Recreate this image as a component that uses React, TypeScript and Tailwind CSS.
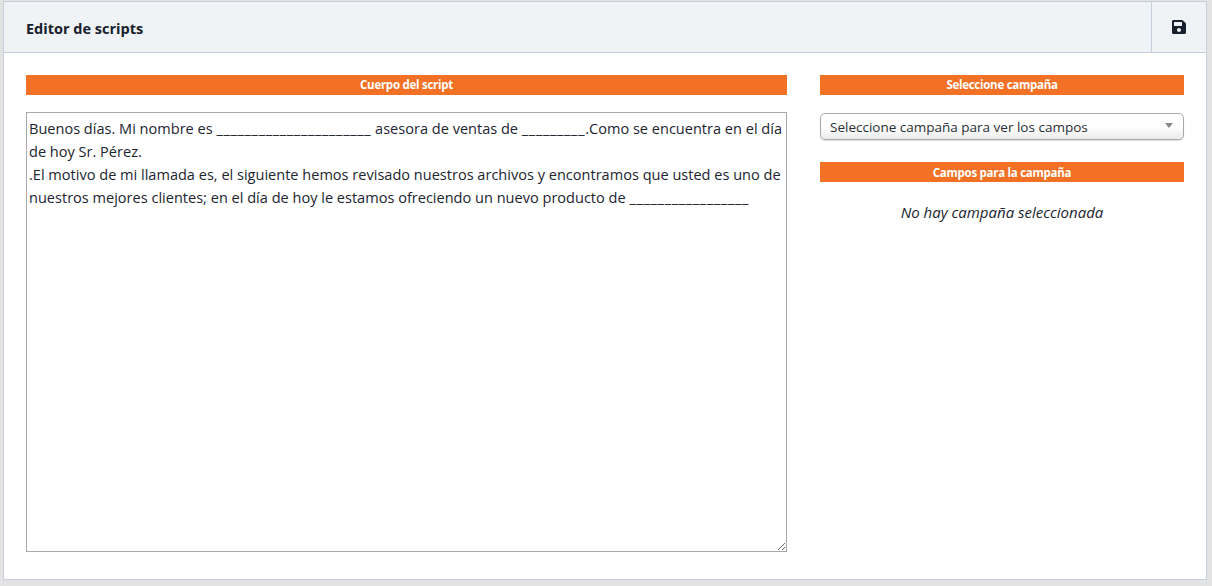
import React from 'react';

const SectionBar: React.FC<{ label: string; className?: string }> = ({ label, className }) => (
  <div className={`h-5 bg-[#f37124] text-center text-[11.5px] font-bold tracking-[-0.27px] text-white ${className ?? 'leading-5'}`}>{label}</div>
);

// underscores are wider in the original font
const Blank: React.FC<{ text: string }> = ({ text }) => <span className="tracking-[0.67px]">{text}</span>;

const App: React.FC = () => {
  return (
    <div className="h-[586px] w-[1212px] overflow-hidden bg-[#e3e3e3] pt-px pr-[5px] pb-[6px] pl-[3px] font-['Open_Sans','Noto_Sans',sans-serif] text-[#1c2430]">
      <div className="flex h-[579px] flex-col border border-[#c5d0dc] bg-white">
        {/* Header */}
        <div className="flex h-[51px] shrink-0 items-center border-b border-[#c5d0dc] bg-[#eff3f6]">
          <h1 className="flex-1 pt-[3px] pl-[22px] text-[14.5px] font-bold text-[#16202c]">Editor de scripts</h1>
          <button className="flex h-full w-[55px] items-center justify-center border-l border-[#c5d0dc]">
            <svg width="16" height="16" viewBox="0 0 448 512" fill="#16202c">
              <path d="M433.941 129.941l-83.882-83.882A48 48 0 0 0 316.118 32H48C21.49 32 0 53.49 0 80v352c0 26.51 21.49 48 48 48h352c26.51 0 48-21.49 48-48V163.882a48 48 0 0 0-14.059-33.941zM224 416c-35.346 0-64-28.654-64-64 0-35.346 28.654-64 64-64s64 28.654 64 64c0 35.346-28.654 64-64 64zm96-304.52V212c0 6.627-5.373 12-12 12H76c-6.627 0-12-5.373-12-12V108c0-6.627 5.373-12 12-12h228.52c3.183 0 6.235 1.264 8.485 3.515l3.48 3.48A11.996 11.996 0 0 1 320 111.48z" />
            </svg>
          </button>
        </div>

        {/* Body */}
        <div className="grid flex-1 grid-cols-[761px_364px] gap-x-[33px] px-[22px] pt-[22px]">
          <div className="flex flex-col gap-[17px]">
            <SectionBar label="Cuerpo del script" />
            <div
              contentEditable
              suppressContentEditableWarning
              className="h-[440px] w-[761px] resize overflow-auto border border-[#a9a9a9] px-[2px] py-1 text-[14.55px] leading-[23px] whitespace-nowrap text-[#1c2430] outline-none"
            >
              <div>
                Buenos días. Mi nombre es <Blank text="______________________" /> asesora de ventas de <Blank text="_________" />.Como se encuentra en el día
              </div>
              <div>de hoy Sr. Pérez.</div>
              <div>.El motivo de mi llamada es, el siguiente hemos revisado nuestros archivos y encontramos que usted es uno de</div>
              <div>
                nuestros mejores clientes; en el día de hoy le estamos ofreciendo un nuevo producto de <Blank text="_________________" />
              </div>
            </div>
          </div>

          <div className="flex flex-col">
            <SectionBar label="Seleccione campaña" />
            <div className="mt-[18px] flex h-[27px] items-center justify-between rounded-[5px] border border-[#a8a8a8] bg-gradient-to-b from-white from-50% to-[#ebebeb] pr-[10px] pl-[9px] shadow-[0_1px_1px_rgba(0,0,0,0.12)]">
              <span className="pt-0.5 text-[13.5px] text-[#2a2f36]">Seleccione campaña para ver los campos</span>
              <span className="mb-[2px] h-0 w-0 border-x-[4px] border-t-[5px] border-x-transparent border-t-[#888888]" />
            </div>
            <div className="mt-[22px]">
              <SectionBar label="Campos para la campaña" className="pt-px leading-[19px]" />
            </div>
            <p className="mt-5 text-center text-[15px] leading-5 text-[#1c2430] italic">No hay campaña seleccionada</p>
          </div>
        </div>
      </div>
    </div>
  );
};

export default App;
